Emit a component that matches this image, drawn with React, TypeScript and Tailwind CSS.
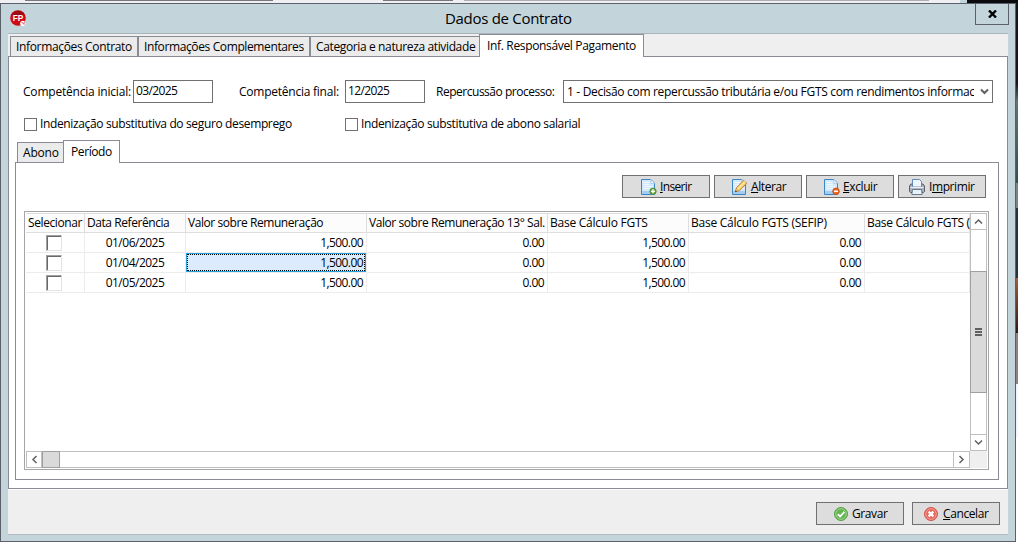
import React, { ReactNode } from 'react';
import clsx from 'clsx';

interface Column {
  title: string;
  width: string;
  tracking: string;
}

const columns: Column[] = [
  { title: 'Selecionar', width: 'w-[59px]', tracking: 'tracking-[-0.4px]' },
  { title: 'Data Referência', width: 'w-[101px]', tracking: 'tracking-[-0.43px]' },
  { title: 'Valor sobre Remuneração', width: 'w-[181px]', tracking: 'tracking-[-0.43px]' },
  { title: 'Valor sobre Remuneração 13° Sal.', width: 'w-[181px]', tracking: 'tracking-[-0.43px]' },
  { title: 'Base Cálculo FGTS', width: 'w-[141px]', tracking: 'tracking-[-0.25px]' },
  { title: 'Base Cálculo FGTS (SEFIP)', width: 'w-[176px]', tracking: 'tracking-[-0.25px]' },
  { title: 'Base Cálculo FGTS (', width: 'w-[105px]', tracking: 'tracking-[-0.3px]' },
];

const rows = [
  { date: '01/06/2025', selected: false },
  { date: '01/04/2025', selected: true },
  { date: '01/05/2025', selected: false },
];

interface ChevronProps {
  dir: 'up' | 'down' | 'left' | 'right';
  weight?: number;
}

function Chevron({ dir, weight = 1.5 }: ChevronProps) {
  const points = {
    up: '1,6.5 4.5,3 8,6.5',
    down: '1,2.5 4.5,6 8,2.5',
    left: '6.5,1 3,4.5 6.5,8',
    right: '2.5,1 6,4.5 2.5,8',
  };
  return (
    <svg width="9" height="9" viewBox="0 0 9 9" fill="none" stroke="#606060" strokeWidth={weight}>
      <polyline points={points[dir]} />
    </svg>
  );
}

function AppLogo() {
  return (
    <svg width="17" height="17" viewBox="0 0 17 17">
      <circle cx="8" cy="8" r="7.8" fill="#cf0a16" />
      <path d="M1 5a8 8 0 0 1 14 0z" fill="#a00a12" />
      <text
        x="2.8"
        y="11"
        fontSize="9.5"
        fontWeight="700"
        fill="#fff"
        fontFamily="Liberation Sans, sans-serif"
        textLength="10.5"
        lengthAdjust="spacingAndGlyphs"
      >
        FP
      </text>
      <circle cx="12.8" cy="13.4" r="2.6" fill="#fff" />
      <path d="M11.4 11.8l2.8 2.8M14.2 12.2v1.4" stroke="#c22" strokeWidth=".9" />
    </svg>
  );
}

function PageShape() {
  return (
    <>
      <path d="M.5.5h9.3l3.700 3.800v11.200h-13z" fill="#d3e9fb" stroke="#3d86c6" />
      <path d="M9.800.5v3.800h3.700z" fill="#fff" stroke="#8fbbe0" strokeWidth=".7" />
      <path d="M2.500 3.500h6M2.500 5.500h6M2.500 7.500h9M2.500 9.500h9" stroke="#eff8ff" />
      <path d="M1 12h12v3h-12z" fill="#a3cef0" />
    </>
  );
}

function InsertIcon() {
  return (
    <svg width="16" height="16" viewBox="0 0 16 16">
      <PageShape />
      <circle cx="12" cy="12.300" r="3.200" fill="#6fae4b" stroke="#44852b" strokeWidth=".8" />
      <path d="M12 10.300v4M10 12.300h4" stroke="#fff" strokeWidth="1.300" />
    </svg>
  );
}

function EditIcon() {
  return (
    <svg width="16" height="16" viewBox="0 0 16 16">
      <PageShape />
      <path d="M3.300 12.800l1.200-4.300 7-7.200 3.300 2.900-7.300 7.500z" fill="#f6c765" stroke="#b07a2c" strokeWidth=".8" />
      <path d="M6 10l7.300-7.400" stroke="#fde9ad" strokeWidth="1.400" />
      <path d="M3.200 12.900l.4-1.700 1.400 1.300z" fill="#333" />
    </svg>
  );
}

function DeleteIcon() {
  return (
    <svg width="16" height="16" viewBox="0 0 16 16">
      <PageShape />
      <circle cx="12" cy="12.300" r="3.300" fill="#ea6a20" stroke="#c44b10" strokeWidth=".8" />
      <path d="M10 12.300h4" stroke="#fff" strokeWidth="1.500" />
    </svg>
  );
}

function PrintIcon() {
  return (
    <svg width="16" height="16" viewBox="0 0 16 16">
      <path d="M.5 7l1.500-2h12l1.500 2v5.500l-1 1h-13l-1-1z" fill="#a9adb6" stroke="#50545c" strokeWidth=".9" />
      <path d="M3.500.5h7l2 2v5.500h-9z" fill="#eef5fc" stroke="#4f7eb4" strokeWidth=".9" />
      <path d="M1.500 8.500h13" stroke="#eceef1" strokeWidth="1.300" />
      <path d="M3.500 10.500h9l.7 5h-10.400z" fill="#e8f2fb" stroke="#5c6f88" strokeWidth=".9" />
    </svg>
  );
}

function ConfirmIcon() {
  return (
    <svg width="14" height="14" viewBox="0 0 14 14">
      <circle cx="7" cy="7" r="6.500" fill="#62b54e" stroke="#4b9a3c" strokeWidth=".9" />
      <circle cx="7" cy="7" r="5.300" fill="none" stroke="#a6d89b" strokeWidth=".9" />
      <path d="M3.800 7.200l2.400 2.300 4.200-4.600" fill="none" stroke="#fff" strokeWidth="1.900" />
    </svg>
  );
}

function CancelIcon() {
  return (
    <svg width="14" height="14" viewBox="0 0 14 14">
      <circle cx="7" cy="7" r="6.500" fill="#e8655a" stroke="#cf4a40" strokeWidth=".9" />
      <circle cx="7" cy="7" r="5.300" fill="none" stroke="#f3a79f" strokeWidth=".9" />
      <path d="M4.600 4.600l4.800 4.800M9.400 4.600l-4.800 4.800" stroke="#fff" strokeWidth="2.200" />
    </svg>
  );
}

interface ActionButtonProps {
  icon: ReactNode;
  children: ReactNode;
  className?: string;
}

function ActionButton({ icon, children, className }: ActionButtonProps) {
  return (
    <button className={clsx('flex h-[23px] w-[88px] items-center border border-[#707070] bg-[#dddddd]', className)}>
      {icon}
      <span className="whitespace-nowrap">{children}</span>
    </button>
  );
}

function Tab({ label, active, className }: { label: string; active?: boolean; className: string }) {
  return (
    <button
      className={clsx(
        'shrink-0 whitespace-nowrap border border-b-0 border-[#898c95] text-left leading-[20px]',
        active ? 'z-10 -mb-px bg-white' : 'bg-[#ebebeb]',
        className
      )}
    >
      {label}
    </button>
  );
}

function CheckField({ label, className }: { label: string; className?: string }) {
  return (
    <label className={clsx('flex items-center whitespace-nowrap', className)}>
      <span className="mr-[3px] size-[13px] shrink-0 border border-[#707070] bg-white" />
      {label}
    </label>
  );
}

function Cell({ className, children }: { className: string; children?: ReactNode }) {
  return (
    <div className={clsx('flex h-5 shrink-0 items-center border-r border-b border-[#ececec]', className)}>{children}</div>
  );
}

function PeriodGrid() {
  return (
    <div className="ml-[8px] mt-[13px] flex h-[259px] w-[965px] border border-[#a5a5a9] bg-white p-px">
      <div className="flex w-[944px] flex-col">
        <div className="h-[238px] overflow-hidden">
          <div className="flex h-5 w-[944px] overflow-hidden bg-[#fcfcfc]">
            {columns.map((col) => (
              <div
                key={col.title}
                className={clsx(
                  'h-5 shrink-0 whitespace-nowrap border-r border-b border-t border-[#dedede] pl-[2px] leading-[18px]',
                  col.width,
                  col.tracking
                )}
              >
                {col.title}
              </div>
            ))}
          </div>
          {rows.map((row) => (
            <div key={row.date} className="flex w-[944px] overflow-hidden tracking-[-0.58px]">
              <Cell className="w-[59px] pl-5">
                <span className="size-4 border border-t-[#a0a0a0] border-l-[#a0a0a0] border-r-[#e3e3e3] border-b-[#e3e3e3]">
                  <span className="block size-[14px] border-t border-l border-[#696969]" />
                </span>
              </Cell>
              <Cell className="w-[101px] justify-center tracking-[-0.5px]">{row.date}</Cell>
              <Cell className="w-[181px]">
                {row.selected ? (
                  <span className="h-[19px] w-[180px] shrink-0 border border-[#26a0da]">
                    <span className="block h-[17px] border border-dotted border-black bg-[#dcebfd] pr-px text-right leading-[16px]">
                      1,500.00
                    </span>
                  </span>
                ) : (
                  <span className="w-full pr-[3px] text-right">1,500.00</span>
                )}
              </Cell>
              <Cell className="w-[181px] justify-end pr-[3px]">0.00</Cell>
              <Cell className="w-[141px] justify-end pr-[3px]">1,500.00</Cell>
              <Cell className="w-[176px] justify-end pr-[3px]">0.00</Cell>
              <Cell className="w-[105px]" />
            </div>
          ))}
        </div>
        <div className="flex h-[17px] border border-[#bfbfbf] bg-white">
          <div className="flex w-[15px] items-center justify-center border-r border-[#bfbfbf]">
            <Chevron dir="left" />
          </div>
          <div className="-my-px w-[18px] border border-[#a0a0a0] bg-[#dadada]" />
          <div className="flex-1" />
          <div className="flex w-4 items-center justify-center border-l border-[#bfbfbf]">
            <Chevron dir="right" />
          </div>
        </div>
      </div>
      <div className="flex w-[17px] flex-col">
        <div className="flex h-[238px] flex-col border border-[#bfbfbf] bg-white">
          <div className="flex h-4 items-center justify-center border-b border-[#bfbfbf]">
            <Chevron dir="up" />
          </div>
          <div className="h-[41px]" />
          <div className="-mx-px flex h-[122px] flex-col items-center justify-center gap-px border border-[#a0a0a0] bg-[#dadada]">
            <div className="h-[2px] w-[7px] bg-[#606060]" />
            <div className="h-[2px] w-[7px] bg-[#606060]" />
            <div className="h-[2px] w-[7px] bg-[#606060]" />
          </div>
          <div className="flex-1" />
          <div className="flex h-4 items-center justify-center border-t border-[#bfbfbf]">
            <Chevron dir="down" />
          </div>
        </div>
        <div className="h-[17px] bg-[#efefef]" />
      </div>
    </div>
  );
}

function PaymentPanel() {
  return (
    <div className="h-[433px] border border-[#898c95] bg-white">
      <div className="mt-[23px] flex h-[23px] items-center whitespace-nowrap">
        <span className="ml-[14px] w-[110px] tracking-[-0.2px]">Competência inicial:</span>
        <div className="h-[23px] w-20 border border-[#707070] pl-[2px] leading-[20px] tracking-[-0.6px]">03/2025</div>
        <span className="ml-[26px] w-[106px] tracking-[-0.24px]">Competência final:</span>
        <div className="h-[23px] w-20 border border-[#707070] pl-[2px] leading-[20px] tracking-[-0.6px]">12/2025</div>
        <span className="ml-[11px] w-[127px] tracking-[-0.48px]">Repercussão processo:</span>
        <div className="flex h-[23px] w-[430px] items-center border border-[#707070] pl-[3px]">
          <span className="w-[407px] overflow-hidden leading-[20px] tracking-[-0.32px]">
            1 - Decisão com repercussão tributária e/ou FGTS com rendimentos informac
          </span>
          <span className="ml-[6px]">
            <Chevron dir="down" weight={2} />
          </span>
        </div>
      </div>
      <div className="mt-[12px] flex h-[18px] items-center tracking-[-0.36px]">
        <CheckField className="ml-[15px] w-[321px]" label="Indenização substitutiva do seguro desemprego" />
        <CheckField label="Indenização substitutiva de abono salarial" />
      </div>
      <div className="ml-[8px] mt-[7px] flex h-[22px] items-end">
        <Tab label="Abono" className="h-5 w-[46px] border-r-0 pl-[5px] tracking-[-0.2px]" />
        <Tab label="Período" active className="h-[23px] w-[57px] pl-[7px] tracking-[-0.4px]" />
      </div>
      <div className="ml-[6px] h-[318px] w-[984px] border border-[#898c95] bg-white">
        <div className="mt-[12px] flex justify-end gap-1 pr-[12px] tracking-[-0.4px]">
          <ActionButton className="gap-[3px] pl-[18px] tracking-[-0.65px]" icon={<InsertIcon />}><u>I</u>nserir</ActionButton>
          <ActionButton className="gap-[3px] pl-[17px]" icon={<EditIcon />}><u>A</u>lterar</ActionButton>
          <ActionButton className="gap-[3px] pl-[17px]" icon={<DeleteIcon />}><u>E</u>xcluir</ActionButton>
          <ActionButton className="gap-[4px] pl-[10px]" icon={<PrintIcon />}>I<u>m</u>primir</ActionButton>
        </div>
        <PeriodGrid />
      </div>
    </div>
  );
}

export default function App() {
  return (
    <div className="flex h-[547px] w-[1018px] flex-col overflow-hidden bg-white font-['Open_Sans','Noto_Sans',sans-serif] text-[12px] leading-4 text-black">
      <div className="flex h-[3px] bg-[#f0eff2]">
        <div className="ml-[25px] h-px w-[248px] bg-[#77777c]" />
        <div className="ml-[110px] h-px w-[70px] bg-[#77777c]" />
        <div className="ml-[11px] h-px w-[465px] bg-[#adadb3]" />
        <div className="ml-[31px] w-[7px] bg-[#c3d5db]" />
        <div className="flex-1 bg-[#0b0b0d]" />
      </div>
      <div className="flex">
        <div className="h-[539px] w-[1016px] border border-[#5c6068] bg-[#c3d5db]">
          <div className="flex h-[29px] pl-[9px]">
            <div className="mt-[6px] w-[435px] shrink-0">
              <AppLogo />
            </div>
            <div className="w-[530px] shrink-0 text-[15px] leading-[29px] tracking-[-0.3px]">Dados de Contrato</div>
            <div className="-mt-px flex h-[22px] w-[34px] items-center justify-center border border-[#5c6068]">
              <svg width="9" height="8" viewBox="0 0 9 8" stroke="#000" strokeWidth="2.4">
                <path d="M1 .5l7 7M8 .5l-7 7" />
              </svg>
            </div>
          </div>
          <div className="ml-[7px] h-[502px] w-[1000px] border-t border-b border-t-[#a9b3bb] border-b-[#b3bdc1] bg-[#efefef]">
            <div className="flex h-[22px] items-end pl-[2px]">
              <Tab label="Informações Contrato" className="h-5 w-[128px] pl-[5px] tracking-[-0.34px]" />
              <Tab label="Informações Complementares" className="h-5 w-[172px] pl-[5px] tracking-[-0.38px]" />
              <Tab label="Categoria e natureza atividade" className="h-5 w-[169px] border-r-0 pl-[5px] tracking-[-0.37px]" />
              <Tab label="Inf. Responsável Pagamento" active className="h-[23px] w-[165px] pl-[7px] tracking-[-0.34px]" />
            </div>
            <PaymentPanel />
            <div className="flex justify-end gap-2 border-t border-white pt-[12px] pr-[8px]">
              <ActionButton className="gap-1 pl-[17px] tracking-[-0.4px]" icon={<ConfirmIcon />}>Gravar</ActionButton>
              <ActionButton className="gap-[5px] pl-[11px] tracking-[-0.4px]" icon={<CancelIcon />}><u>C</u>ancelar</ActionButton>
            </div>
          </div>
        </div>
        <div className="flex w-[2px] flex-col">
          <div className="h-[80px] bg-[#14171a]" />
          <div className="h-[20px] bg-linear-to-b from-[#14171a] to-[#6a7a7c]" />
          <div className="h-[80px] bg-linear-to-b from-[#5f7473] to-[#35504f]" />
          <div className="h-[25px] bg-[#7b8384]" />
          <div className="h-[70px] bg-[#263139]" />
          <div className="h-[55px] bg-linear-to-b from-[#a65c3c] to-[#2b1c18]" />
          <div className="h-[51px] bg-[#8d8280]" />
          <div className="h-[53px] bg-[#f1f5fc]" />
        </div>
      </div>
    </div>
  );
}
